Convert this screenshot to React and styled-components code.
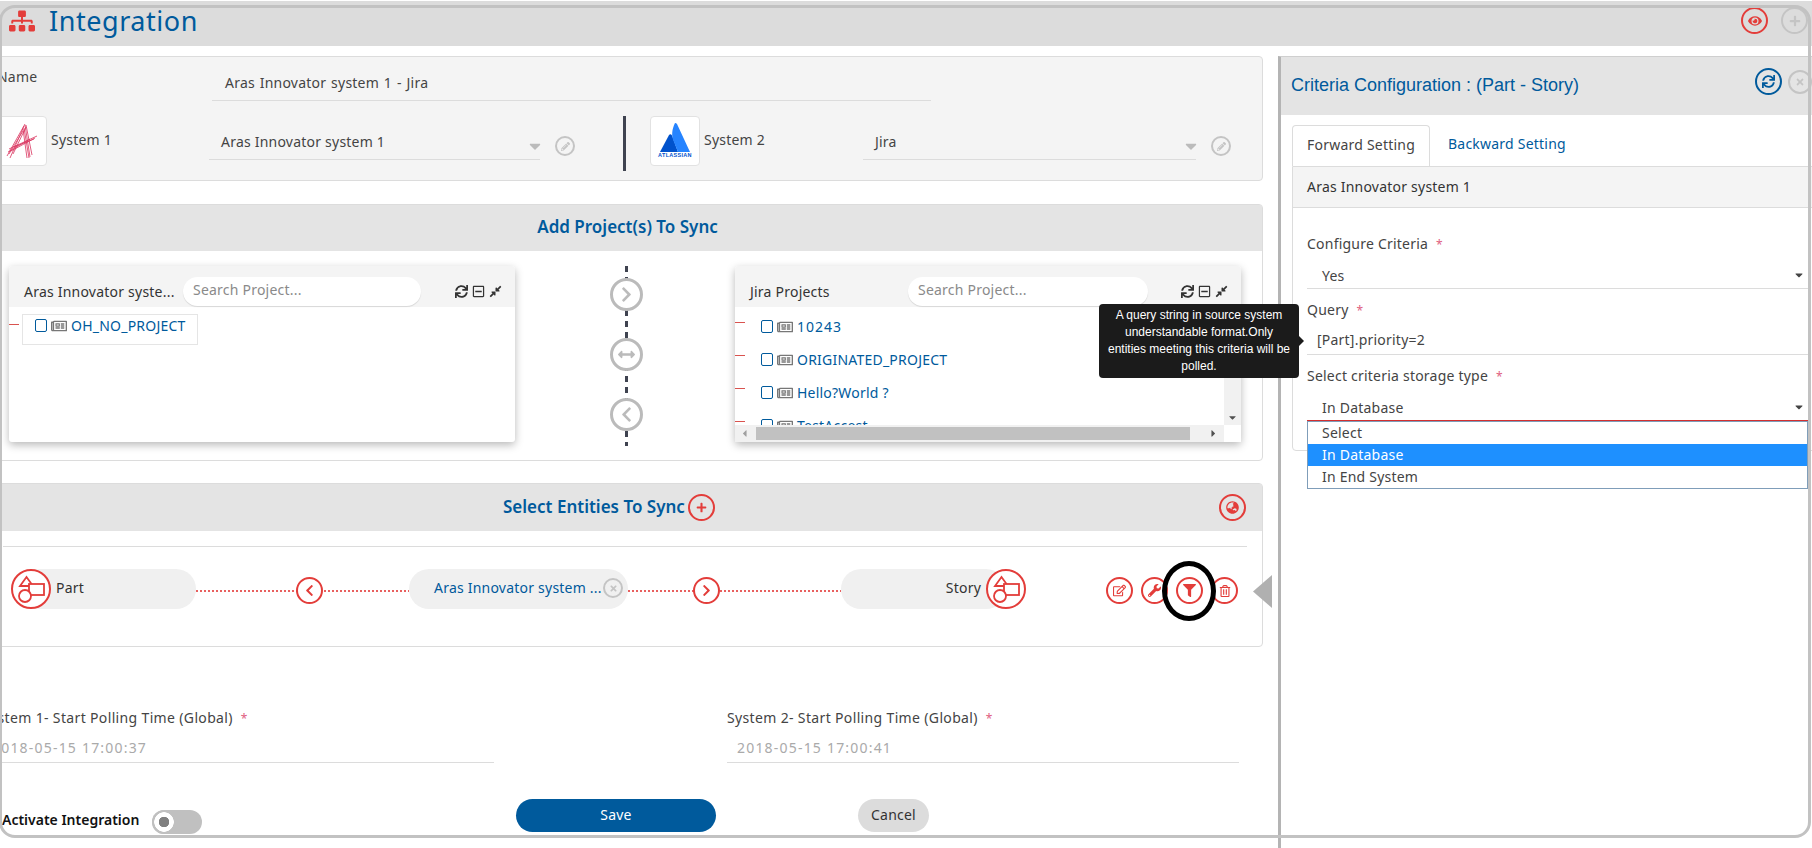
import React from 'react'
import styled, { createGlobalStyle } from 'styled-components'
import {
  FaSitemap, FaEye, FaPlus, FaPencilAlt, FaSync, FaRegMinusSquare, FaCompressAlt, FaRegNewspaper,
  FaChevronRight, FaChevronLeft, FaArrowsAltH, FaGlobeAsia, FaTimes, FaRegEdit, FaWrench, FaFilter,
  FaRegTrashAlt, FaCaretDown, FaCaretLeft, FaCaretRight,
} from 'react-icons/fa'

const BLUE = '#005a9c'
const RED = '#e33d3a'
const GREY = '#c4c4c4'

const GlobalStyle = createGlobalStyle`
  html, body { margin: 0; padding: 0; background: #fff; }
  body { font-family: "Noto Sans", "Open Sans", sans-serif; font-size: 14px; letter-spacing: 0.22px; color: #444; }
  * { box-sizing: border-box; }
`

const Page = styled.div`
  position: relative;
  width: 1812px;
  height: 848px;
  overflow: hidden;
  background: #fff;
`
// the rounded line of the host window lies over everything
const WindowLine = styled.div`
  position: absolute;
  left: -1px;
  top: 5px;
  width: 1812px;
  height: 833px;
  border: 3px solid #c2c2c2;
  border-radius: 16px;
  pointer-events: none;
  z-index: 20;
`
const TitleBar = styled.div`
  height: 45px;
  margin-top: 1px;
  background: #dcdcdc;
  display: flex;
  align-items: center;
  padding: 0 4px 6px 9px;
`
const PageTitle = styled.h1`
  margin: 0 auto 0 14px;
  font-size: 27px;
  font-weight: 400;
  letter-spacing: 0.55px;
  color: ${BLUE};
  line-height: 40px;
`
const Body = styled.div`
  display: flex;
  height: 802px;
`
const Main = styled.div`
  flex: none;
  width: 1286px;
  margin-left: -8px;
  padding: 10px 15px 0 0;
`
const Card = styled.div`
  position: relative;
  width: 1271px;
  height: ${p => p.$h}px;
  margin-top: ${p => p.$top || 0}px;
  background: ${p => p.$bg || '#fff'};
  border: 1px solid #dcdcdc;
  border-radius: 4px;
`
const NameRow = styled.div`
  height: 59px;
  display: flex;
  padding-left: 4px;
`
const NameLabel = styled.div`
  width: 215px;
  padding-top: 10px;
  line-height: 20px;
`
const NameValue = styled.div`
  width: 719px;
  height: 44px;
  padding: 16px 0 0 13px;
  line-height: 20px;
  word-spacing: 1px;
  border-bottom: 1px solid #dcdcdc;
`
const SystemRow = styled.div`
  display: flex;
  align-items: flex-start;
  padding-left: 4px;
`
const LogoBox = styled.div`
  flex: none;
  width: 50px;
  height: 50px;
  margin-left: ${p => p.$left || 0}px;
  background: #fff;
  border: 1px solid #e2e2e2;
  border-radius: 4px;
  display: flex;
  flex-direction: column;
  align-items: center;
  justify-content: center;
`
const AtlassianText = styled.span`
  font-family: "Liberation Sans", sans-serif;
  font-size: 5.5px;
  font-weight: 700;
  letter-spacing: 0.3px;
  line-height: 7px;
  color: #0052cc;
`
const SystemLabel = styled.div`
  flex: none;
  width: ${p => p.$w}px;
  margin-left: 4px;
  line-height: 48px;
`
const SelectBox = styled.div`
  flex: none;
  width: ${p => p.$w}px;
  height: 44px;
  padding: 16px 0 0 12px;
  display: flex;
  justify-content: space-between;
  line-height: 20px;
  border-bottom: 1px solid #dcdcdc;
  svg { margin: 5px -4px 0 0; color: #bbb; font-size: 18px; }
`
const VDivider = styled.div`
  flex: none;
  width: 3px;
  height: 55px;
  margin-left: 48px;
  background: #3f4350;
`
// round icon button, used all over the page
const Round = styled.span`
  flex: none;
  display: inline-flex;
  align-items: center;
  justify-content: center;
  width: ${p => p.$size || 27}px;
  height: ${p => p.$size || 27}px;
  margin: ${p => p.$margin || 0};
  border-radius: 50%;
  border: ${p => p.$stroke || 2.5}px solid ${p => p.$color || RED};
  color: ${p => p.$color || RED};
  font-size: ${p => p.$icon || 12}px;
  background: ${p => p.$fill || 'transparent'};
`
const SectionHead = styled.div`
  height: ${p => p.$h || 46}px;
  background: #e4e4e4;
  display: flex;
  align-items: center;
  justify-content: ${p => (p.$center ? 'center' : 'flex-start')};
  padding: ${p => p.$padding || 0};
`
const SectionTitle = styled.h2`
  margin: -3px 0 0;
  font-size: 17px;
  font-weight: 600;
  letter-spacing: 0;
  color: ${BLUE};
`
const TreeRowWrap = styled.div`
  display: flex;
  padding: 15px 0 0 16px;
`
const TreePanel = styled.div`
  flex: none;
  display: flex;
  flex-direction: column;
  width: 506px;
  height: 176px;
  margin-left: ${p => p.$left || 0}px;
  background: #fff;
  border-radius: 3px;
  box-shadow: 0 3px 8px rgba(0, 0, 0, 0.28);
`
const PanelHead = styled.div`
  flex: none;
  height: 41px;
  padding: 11px 13px 1px 15px;
  display: flex;
  align-items: center;
  background: #f4f4f4;
  border-radius: 3px 3px 0 0;
  color: #333;
`
const PanelTitle = styled.div`
  flex: none;
  width: ${p => p.$w}px;
  margin-top: -1px;
  white-space: nowrap;
`
const SearchPill = styled.div`
  flex: none;
  width: ${p => p.$w}px;
  height: 29px;
  padding-left: 10px;
  line-height: 26px;
  border-radius: 15px;
  background: #fff;
  box-shadow: 0 1px 1px rgba(0, 0, 0, 0.12);
  color: #8a8a8a;
`
const PanelTools = styled.div`
  margin-left: auto;
  display: flex;
  gap: 4px;
  font-size: 13px;
  color: #333;
`
const TreeBox = styled.div`
  display: flex;
  align-items: flex-start;
  padding-top: 7px;
`
const RedDash = styled.span`
  flex: none;
  width: 10px;
  height: 1px;
  margin: ${p => p.$top}px ${p => p.$right}px 0 0;
  background: #d9534f;
`
const TreeItem = styled.div`
  flex: none;
  width: 176px;
  height: 31px;
  padding: 0 0 8px 12px;
  display: flex;
  align-items: center;
  border: 1px solid #e5e5e5;
  color: ${BLUE};
`
const Check = styled.span`
  flex: none;
  width: 12px;
  height: 13px;
  margin-right: 4px;
  border: 1px solid ${BLUE};
  border-radius: 2px;
`
const NewsIcon = styled(FaRegNewspaper)`
  flex: none;
  margin-right: 4px;
  font-size: 16px;
  color: #777;
`
const Connector = styled.div`
  flex: none;
  width: 34px;
  height: 180px;
  margin-left: 94px;
  display: flex;
  flex-direction: column;
  align-items: center;
  gap: 27px;
  padding-top: 12px;
  background: repeating-linear-gradient(180deg, #3f4350 0 6px, transparent 6px 11px) center / 3px 100% no-repeat;
`
const ScrollArea = styled.div`
  flex: 1;
  min-height: 0;
  display: flex;
`
const TreeList = styled.div`
  flex: 1;
  height: 118px;
  padding-top: 3px;
  overflow: hidden;
`
const TreeRow = styled.div`
  height: 33px;
  display: flex;
  align-items: center;
  letter-spacing: ${p => (p.$digits ? '1px' : 'inherit')};
  color: ${BLUE};
`
const RowDash = styled.span`
  flex: none;
  width: 10px;
  height: 1px;
  margin: -9px 16px 0 0;
  background: #d9534f;
`
const VTrack = styled.div`
  flex: none;
  width: 17px;
  height: 118px;
  background: #f1f1f1;
  display: flex;
  flex-direction: column;
  justify-content: flex-end;
  align-items: center;
  padding-bottom: 2px;
  font-size: 11px;
  color: #505050;
`
const HScroll = styled.div`
  flex: none;
  height: 17px;
  display: flex;
  align-items: center;
  padding-right: 17px;
  background: linear-gradient(90deg, #f1f1f1 489px, #fff 489px);
  font-size: 11px;
  color: #505050;
`
const HThumb = styled.div`
  width: 434px;
  height: 13px;
  margin: 0 auto 0 0;
  background: #c1c1c1;
`
const Tooltip = styled.div`
  position: absolute;
  left: 1099px;
  top: 304px;
  width: 200px;
  height: 74px;
  padding: 3px 6px;
  border-radius: 4px;
  background: #1b1b1b;
  color: #fff;
  font-family: "Liberation Sans", sans-serif;
  font-size: 12px;
  letter-spacing: 0;
  line-height: 17px;
  text-align: center;
  z-index: 10;
  &:after {
    content: '';
    position: absolute;
    right: -5px;
    top: 32px;
    border: 5px solid transparent;
    border-left-color: #1b1b1b;
    border-right-width: 0;
  }
`
const Rule = styled.div`
  height: 1px;
  margin: 15px 15px 0 10px;
  background: #dcdcdc;
`
const FlowRow = styled.div`
  display: flex;
  align-items: center;
  height: 40px;
  margin-top: 22px;
  padding-left: 27px;
`
const Pill = styled.div`
  flex: none;
  width: ${p => p.$w}px;
  height: 40px;
  padding: ${p => p.$padding || 0};
  display: flex;
  align-items: center;
  justify-content: ${p => (p.$end ? 'flex-end' : 'flex-start')};
  border-radius: 20px;
  background: #f0f0f0;
  color: ${p => p.$color || '#333'};
  white-space: nowrap;
`
const PillText = styled.span`
  margin-top: -4px;
`
const ShapeBadge = styled.span`
  flex: none;
  width: 40px;
  height: 40px;
  margin: ${p => p.$margin};
  border-radius: 50%;
  border: 2px solid ${RED};
  background: #fff;
  display: flex;
`
const FlowLink = styled.div`
  flex: none;
  width: 213px;
  height: 27px;
  margin-top: 3px;
  padding-left: ${p => p.$offset}px;
  background: repeating-linear-gradient(90deg, #e8605f 0 2px, transparent 2px 4px) center / 100% 2px no-repeat;
`
const LinkButton = styled(Round)`
  background: #fff;
`
const Actions = styled.div`
  display: flex;
  gap: 8px;
  margin: 3px 0 0 100px;
`
const RingWrap = styled.span`
  position: relative;
  display: inline-flex;
`
const BlackRing = styled.span`
  position: absolute;
  left: -14px;
  top: -16.5px;
  width: 54px;
  height: 60px;
  border: 5.5px solid #000;
  border-radius: 50%;
  z-index: 3;
`
const Handle = styled.div`
  position: absolute;
  right: -10px;
  top: 91px;
  width: 19px;
  height: 33px;
  background: #b0b0b0;
  clip-path: polygon(100% 0, 100% 100%, 0 50%);
`
const FieldRow = styled.div`
  display: flex;
  gap: 233px;
  margin: 61px 0 0 -10px;
`
const Field = styled.div`
  flex: none;
  width: 512px;
`
const FieldLabel = styled.div`
  line-height: 20px;
  letter-spacing: 0.35px;
  white-space: nowrap;
`
const Star = styled.span`
  margin-left: 8px;
  font-size: 12px;
  line-height: 1;
  color: #e0607f;
`
const FieldValue = styled.div`
  height: 35px;
  padding: 10px 0 0 10px;
  line-height: 20px;
  letter-spacing: 1.2px;
  color: #aaa;
  border-bottom: 1px solid #dcdcdc;
`
const Footer = styled.div`
  display: flex;
  margin-top: 36px;
`
const ActivateGroup = styled.div`
  flex: none;
  width: 524px;
  height: 33px;
  padding: 7px 0 0 10px;
  display: flex;
  align-items: center;
`
const ActivateText = styled.b`
  color: #111;
  font-size: 14px;
  font-weight: 600;
  letter-spacing: 0;
  white-space: nowrap;
`
const Toggle = styled.span`
  flex: none;
  width: 50px;
  height: 24px;
  margin: 6px 0 0 13px;
  border-radius: 12px;
  background: #c0c0c0;
  display: flex;
  &:before {
    content: '';
    width: 24px;
    height: 24px;
    border-radius: 50%;
    background: radial-gradient(circle, #808080 0 5px, #fff 5.5px 9.5px, #c0c0c0 10px);
  }
`
const Button = styled.div`
  flex: none;
  width: ${p => p.$w}px;
  height: 33px;
  margin-left: ${p => p.$left || 0}px;
  border-radius: 17px;
  background: ${p => p.$bg};
  color: ${p => p.$color};
  line-height: 31px;
  text-align: center;
`
const SidePanel = styled.div`
  flex: 1;
  margin-top: 10px;
  border-left: 3px solid #b4b4b4;
  border-top: 1px solid #cfcfcf;
  background: #fff;
`
const SideHead = styled.div`
  height: 58px;
  padding-left: 10px;
  display: flex;
  align-items: center;
  gap: 6px;
  background: #e4e4e4;
`
const SideTitle = styled.div`
  margin: -2px auto 0 0;
  font-family: "Liberation Sans", sans-serif;
  font-size: 18px;
  letter-spacing: 0;
  color: ${BLUE};
`
const Tabs = styled.div`
  display: flex;
  padding: 10px 0 0 11px;
`
const Tab = styled.div`
  width: ${p => p.$w}px;
  height: 41px;
  padding-left: ${p => p.$pad}px;
  line-height: 38px;
  color: ${p => (p.$active ? '#444' : BLUE)};
  border: ${p => (p.$active ? '1px solid #dcdcdc' : '0')};
  border-bottom: 0;
  border-radius: 4px 4px 0 0;
  white-space: nowrap;
`
const ConfigCard = styled.div`
  height: 285px;
  margin: 0 -5px 0 11px;
  border: 1px solid #dcdcdc;
  border-radius: 0 0 4px 4px;
`
const ConfigHead = styled.div`
  height: 41px;
  padding-left: 14px;
  line-height: 40px;
  background: #f4f4f4;
  border-bottom: 1px solid #dcdcdc;
  color: #333;
`
const ConfigForm = styled.div`
  padding: 26px 8px 0 14px;
`
const ConfigLabel = styled.div`
  margin-top: ${p => p.$top || 0}px;
  line-height: 20px;
`
const ConfigInput = styled.div`
  position: relative;
  height: 35px;
  padding: ${p => p.$pad || '12px 0 0 15px'};
  display: flex;
  justify-content: space-between;
  line-height: 20px;
  border-bottom: 1px solid ${p => p.$line || '#dcdcdc'};
  svg { margin: 3px 3px 0 0; color: #444; font-size: 12px; }
`
const Dropdown = styled.div`
  position: absolute;
  left: 0;
  right: 0;
  top: 35px;
  border: 1px solid #7f9db9;
  background: #fff;
  z-index: 5;
`
const Option = styled.div`
  height: 22px;
  padding-left: 14px;
  line-height: 21px;
  background: ${p => (p.$on ? '#1e90ff' : '#fff')};
  color: ${p => (p.$on ? '#fff' : '#444')};
`

function ShapesIcon() {
  return (
    <svg width="36" height="36" viewBox="0 0 36 36" fill="none" stroke={RED} strokeWidth="1.8">
      <path d="M13.5 6 L20 15 H7 Z" />
      <rect x="16" y="13" width="15" height="11" fill="#fff" />
      <circle cx="12" cy="25" r="6" fill="#fff" />
    </svg>
  )
}

function ArasLogo() {
  return (
    <svg width="32" height="36" viewBox="0 0 32 36" fill="none" stroke="#d9335e" strokeWidth="0.8">
      <path d="M19 1 L1 33" />
      <path d="M18 3 L4 35" />
      <path d="M20 4 L7 31" />
      <path d="M17 8 L3 31" />
      <path d="M19 2 L24 34" />
      <path d="M17 6 L21 35" />
      <path d="M20 2 L26 32" />
      <path d="M18 5 L23 35" />
      <path d="M3 26 L31 13" />
      <path d="M5 28 L29 15" />
      <path d="M8 24 L28 16" />
      <path d="M2 29 L24 16" />
    </svg>
  )
}

function AtlassianLogo() {
  return (
    <svg width="32" height="29" viewBox="0 0 32 29">
      <path d="M10 12 C11 11 12 11 13 12.5 L19 29 H1 Z" fill="#0052cc" />
      <path d="M16 0 C13 6 12 13 15 19 L19 29 H31 L18 1 C17.4 0 16.5 0 16 0 Z" fill="#2684ff" />
    </svg>
  )
}

function Tools() {
  return (
    <PanelTools>
      <FaSync />
      <FaRegMinusSquare />
      <FaCompressAlt />
    </PanelTools>
  )
}

const jiraProjects = ['10243', 'ORIGINATED_PROJECT', 'Hello?World ?', 'TestAccest']

export default function App() {
  return (
    <Page>
      <GlobalStyle />
      <TitleBar>
        <FaSitemap size={26} color={RED} />
        <PageTitle>Integration</PageTitle>
        <Round $icon={14} $margin="0 13px 0 0"><FaEye /></Round>
        <Round $color={GREY} $icon={12}><FaPlus /></Round>
      </TitleBar>
      <Body>
        <Main>
          <Card $h={125} $bg="#f4f4f4">
            <NameRow>
              <NameLabel>Name</NameLabel>
              <NameValue>Aras Innovator system 1 - Jira</NameValue>
            </NameRow>
            <SystemRow>
              <LogoBox><ArasLogo /></LogoBox>
              <SystemLabel $w={158}>System 1</SystemLabel>
              <SelectBox $w={331}>Aras Innovator system 1<FaCaretDown /></SelectBox>
              <Round $size={20} $stroke={2} $color={GREY} $icon={9} $margin="20px 0 0 15px"><FaPencilAlt /></Round>
              <VDivider />
              <LogoBox $left={24}>
                <AtlassianLogo />
                <AtlassianText>ATLASSIAN</AtlassianText>
              </LogoBox>
              <SystemLabel $w={159}>System 2</SystemLabel>
              <SelectBox $w={333}>Jira<FaCaretDown /></SelectBox>
              <Round $size={20} $stroke={2} $color={GREY} $icon={9} $margin="20px 0 0 15px"><FaPencilAlt /></Round>
            </SystemRow>
          </Card>

          <Card $h={257} $top={23}>
            <SectionHead $center><SectionTitle>Add Project(s) To Sync</SectionTitle></SectionHead>
            <TreeRowWrap>
              <TreePanel>
                <PanelHead>
                  <PanelTitle $w={159}>Aras Innovator syste...</PanelTitle>
                  <SearchPill $w={238}>Search Project...</SearchPill>
                  <Tools />
                </PanelHead>
                <TreeBox>
                  <RedDash $top={10} $right={3} />
                  <TreeItem><Check /><NewsIcon />OH_NO_PROJECT</TreeItem>
                </TreeBox>
              </TreePanel>
              <Connector>
                <Round $size={33} $stroke={3} $color="#bbb" $fill="#fff" $icon={17}><FaChevronRight /></Round>
                <Round $size={33} $stroke={3} $color="#bbb" $fill="#fff" $icon={17}><FaArrowsAltH /></Round>
                <Round $size={33} $stroke={3} $color="#bbb" $fill="#fff" $icon={17}><FaChevronLeft /></Round>
              </Connector>
              <TreePanel $left={92}>
                <PanelHead>
                  <PanelTitle $w={158}>Jira Projects</PanelTitle>
                  <SearchPill $w={240}>Search Project...</SearchPill>
                  <Tools />
                </PanelHead>
                <ScrollArea>
                  <TreeList>
                    {jiraProjects.map(name => (
                      <TreeRow key={name} $digits={/^\d/.test(name)}><RowDash /><Check /><NewsIcon />{name}</TreeRow>
                    ))}
                  </TreeList>
                  <VTrack><FaCaretDown /></VTrack>
                </ScrollArea>
                <HScroll>
                  <FaCaretLeft style={{ margin: '0 6px 0 4px', color: '#a0a0a0' }} />
                  <HThumb />
                  <FaCaretRight style={{ marginRight: 5 }} />
                </HScroll>
              </TreePanel>
            </TreeRowWrap>
          </Card>

          <Card $h={164} $top={22}>
            <SectionHead $h={47} $padding="0 16px 0 510px">
              <SectionTitle>Select Entities To Sync</SectionTitle>
              <Round $icon={11} $margin="0 0 0 3px"><FaPlus /></Round>
              <Round $icon={13} $margin="0 0 0 auto"><FaGlobeAsia /></Round>
            </SectionHead>
            <Rule />
            <FlowRow>
              <Pill $w={176}>
                <ShapeBadge $margin="0 5px 0 -9px"><ShapesIcon /></ShapeBadge>
                <PillText>Part</PillText>
              </Pill>
              <FlowLink $offset={100}><LinkButton $icon={13}><FaChevronLeft /></LinkButton></FlowLink>
              <Pill $w={219} $color={BLUE} $padding="0 5px 0 25px">
                <PillText>Aras Innovator system ...</PillText>
                <Round $size={20} $stroke={2} $color={GREY} $icon={9} $margin="-2px 0 0 auto"><FaTimes /></Round>
              </Pill>
              <FlowLink $offset={65}><LinkButton $icon={13}><FaChevronRight /></LinkButton></FlowLink>
              <Pill $w={165} $end>
                <PillText>Story</PillText>
                <ShapeBadge $margin="0 -20px 0 5px"><ShapesIcon /></ShapeBadge>
              </Pill>
              <Actions>
                <Round $icon={13}><FaRegEdit /></Round>
                <Round $icon={13}><FaWrench /></Round>
                <RingWrap>
                  <Round $icon={13}><FaFilter /></Round>
                  <BlackRing />
                </RingWrap>
                <Round $icon={12}><FaRegTrashAlt /></Round>
              </Actions>
            </FlowRow>
            <Handle />
          </Card>

          <FieldRow>
            <Field>
              <FieldLabel>System 1- Start Polling Time (Global)<Star>*</Star></FieldLabel>
              <FieldValue>2018-05-15 17:00:37</FieldValue>
            </Field>
            <Field>
              <FieldLabel>System 2- Start Polling Time (Global)<Star>*</Star></FieldLabel>
              <FieldValue>2018-05-15 17:00:41</FieldValue>
            </Field>
          </FieldRow>

          <Footer>
            <ActivateGroup>
              <ActivateText>Activate Integration</ActivateText>
              <Toggle />
            </ActivateGroup>
            <Button $w={200} $bg={BLUE} $color="#fff">Save</Button>
            <Button $w={71} $left={142} $bg="#dcdcdc" $color="#333">Cancel</Button>
          </Footer>
        </Main>

        <SidePanel>
          <SideHead>
            <SideTitle>Criteria Configuration : (Part - Story)</SideTitle>
            <Round $color={BLUE} $icon={13} $margin="0 0 10px 0"><FaSync /></Round>
            <Round $size={24} $color={GREY} $icon={10} $margin="0 0 8px 0"><FaTimes /></Round>
          </SideHead>
          <Tabs>
            <Tab $active $w={138} $pad={14}>Forward Setting</Tab>
            <Tab $w={160} $pad={18}>Backward Setting</Tab>
          </Tabs>
          <ConfigCard>
            <ConfigHead>Aras Innovator system 1</ConfigHead>
            <ConfigForm>
              <ConfigLabel>Configure Criteria<Star>*</Star></ConfigLabel>
              <ConfigInput>Yes<FaCaretDown /></ConfigInput>
              <ConfigLabel $top={11}>Query<Star>*</Star></ConfigLabel>
              <ConfigInput $pad="10px 0 0 10px">[Part].priority=2</ConfigInput>
              <ConfigLabel $top={11}>Select criteria storage type<Star>*</Star></ConfigLabel>
              <ConfigInput $line="#d32f2f">
                In Database<FaCaretDown />
                <Dropdown>
                  <Option>Select</Option>
                  <Option $on>In Database</Option>
                  <Option>In End System</Option>
                </Dropdown>
              </ConfigInput>
            </ConfigForm>
          </ConfigCard>
        </SidePanel>
      </Body>
      <Tooltip>A query string in source system understandable format.Only entities meeting this criteria will be polled.</Tooltip>
      <WindowLine />
    </Page>
  )
}
